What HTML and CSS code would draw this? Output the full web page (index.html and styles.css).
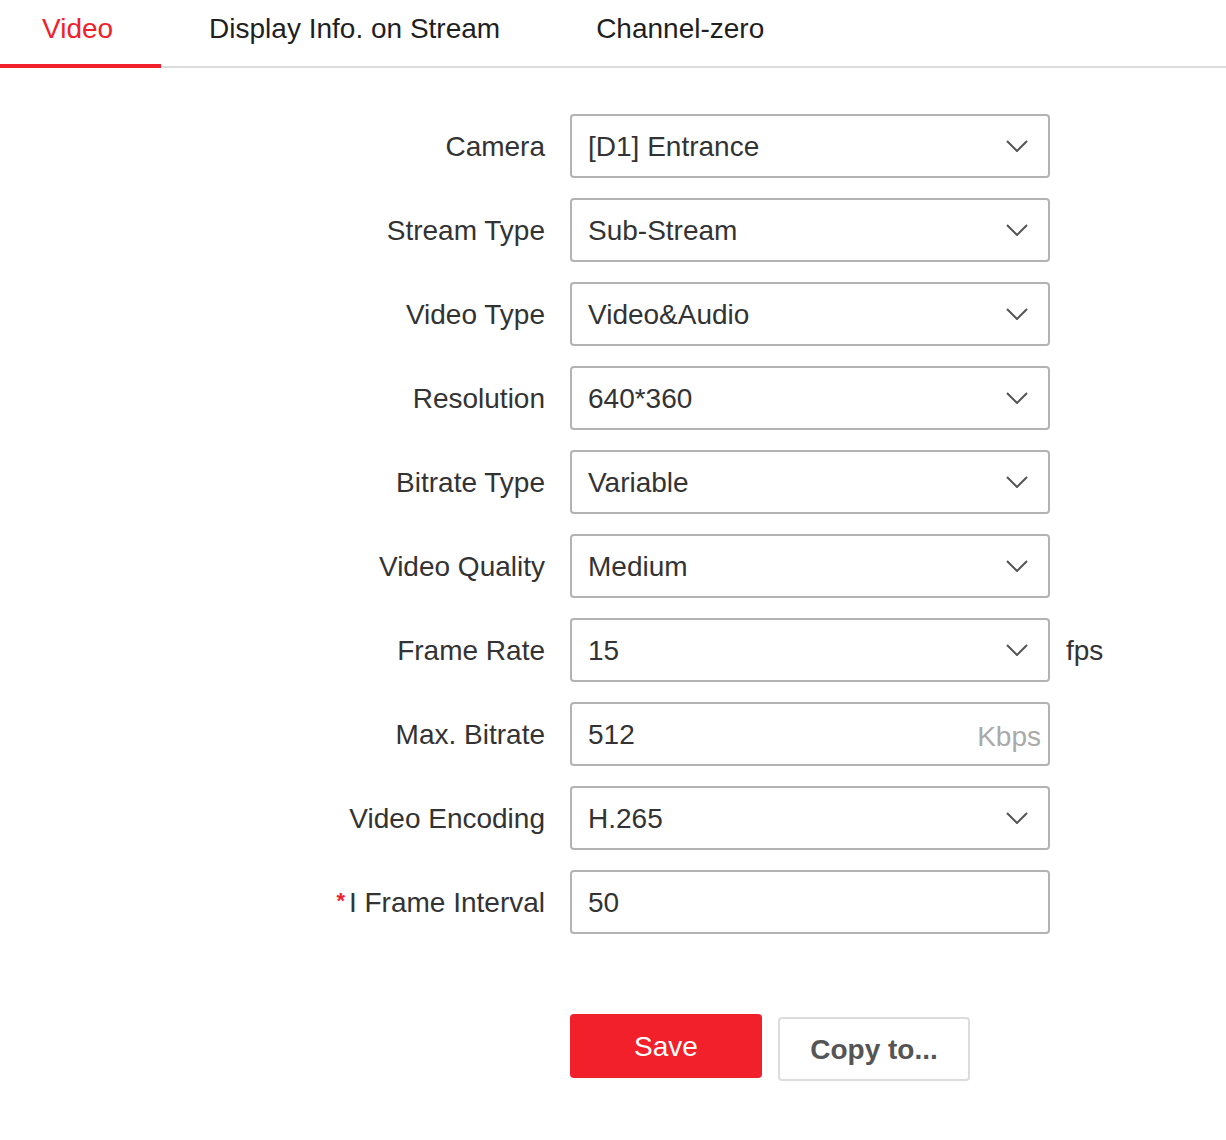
FILE: index.html
```html
<!DOCTYPE html>
<html lang="en">
<head>
    <meta charset="UTF-8">
    <title>Video Settings</title>
    <link rel="stylesheet" href="styles.css">
</head>
<body>
    <div class="tabs">
        <div class="tab active">Video</div>
        <div class="tab">Display Info. on Stream</div>
        <div class="tab">Channel-zero</div>
    </div>

    <div class="form">
        <div class="row">
            <label>Camera</label>
            <div class="select"><span>[D1] Entrance</span><svg class="chevron" viewBox="0 0 22 12"><path d="M1 1l10 10 10-10"/></svg></div>
        </div>
        <div class="row">
            <label>Stream Type</label>
            <div class="select"><span>Sub-Stream</span><svg class="chevron" viewBox="0 0 22 12"><path d="M1 1l10 10 10-10"/></svg></div>
        </div>
        <div class="row">
            <label>Video Type</label>
            <div class="select"><span>Video&amp;Audio</span><svg class="chevron" viewBox="0 0 22 12"><path d="M1 1l10 10 10-10"/></svg></div>
        </div>
        <div class="row">
            <label>Resolution</label>
            <div class="select"><span>640*360</span><svg class="chevron" viewBox="0 0 22 12"><path d="M1 1l10 10 10-10"/></svg></div>
        </div>
        <div class="row">
            <label>Bitrate Type</label>
            <div class="select"><span>Variable</span><svg class="chevron" viewBox="0 0 22 12"><path d="M1 1l10 10 10-10"/></svg></div>
        </div>
        <div class="row">
            <label>Video Quality</label>
            <div class="select"><span>Medium</span><svg class="chevron" viewBox="0 0 22 12"><path d="M1 1l10 10 10-10"/></svg></div>
        </div>
        <div class="row">
            <label>Frame Rate</label>
            <div class="select"><span>15</span><svg class="chevron" viewBox="0 0 22 12"><path d="M1 1l10 10 10-10"/></svg></div>
            <span class="unit">fps</span>
        </div>
        <div class="row">
            <label>Max. Bitrate</label>
            <div class="select"><span>512</span><span class="suffix">Kbps</span></div>
        </div>
        <div class="row">
            <label>Video Encoding</label>
            <div class="select"><span>H.265</span><svg class="chevron" viewBox="0 0 22 12"><path d="M1 1l10 10 10-10"/></svg></div>
        </div>
        <div class="row">
            <label><span class="required">*</span>I Frame Interval</label>
            <div class="select"><span>50</span></div>
        </div>

        <div class="actions">
            <button class="btn-save">Save</button>
            <button class="btn-copy">Copy to...</button>
        </div>
    </div>
</body>
</html>
```
FILE: styles.css
```css
* {
    margin: 0;
    padding: 0;
    box-sizing: border-box;
}

body {
    font-family: "Liberation Sans", Arial, sans-serif;
    font-size: 28px;
    color: #333;
    background: #fff;
}

.tabs {
    display: flex;
    border-bottom: 2px solid #dcdcdc;
}

.tab {
    height: 68px;
    line-height: 58px;
    padding: 0 48px;
    border-bottom: 4px solid transparent;
    margin-bottom: -2px;
    color: #1f1f1f;
}

.tab:first-child {
    padding-left: 42px;
}

.tab.active {
    color: #f2202b;
    border-bottom-color: #f2202b;
}

.form {
    padding-top: 46px;
}

.row {
    display: grid;
    grid-template-columns: 545px 480px auto;
    column-gap: 25px;
    align-items: center;
    margin-bottom: 20px;
}

.row label {
    text-align: right;
    color: #333;
    padding-top: 2px;
}

.required {
    color: #f2202b;
    font-size: 22px;
    font-weight: bold;
    vertical-align: 4px;
    margin-right: 4px;
}

.select {
    height: 64px;
    border: 2px solid #b3b3b3;
    border-radius: 4px;
    display: flex;
    align-items: center;
    justify-content: space-between;
    padding: 2px 20px 0 16px;
    color: #333;
}

.chevron {
    width: 22px;
    height: 12px;
    margin-top: -2px;
    fill: none;
    stroke: #555;
    stroke-width: 2;
}

.suffix {
    color: #aaa;
    margin-right: -13px;
    padding-top: 4px;
}

.unit {
    margin-left: -9px;
    padding-top: 2px;
    color: #333;
}

.actions {
    display: flex;
    align-items: flex-start;
    gap: 16px;
    margin-left: 570px;
    margin-top: 80px;
}

.actions button {
    width: 192px;
    height: 64px;
    padding-top: 2px;
    border-radius: 4px;
    font-family: "Liberation Sans", Arial, sans-serif;
    font-size: 28px;
    cursor: pointer;
}

.btn-save {
    background: #f2202b;
    color: #fff;
    border: none;
}

.btn-copy {
    margin-top: 3px;
    padding-top: 4px;
    background: #fff;
    color: #555;
    font-weight: bold;
    border: 2px solid #dcdcdc;
}
```
